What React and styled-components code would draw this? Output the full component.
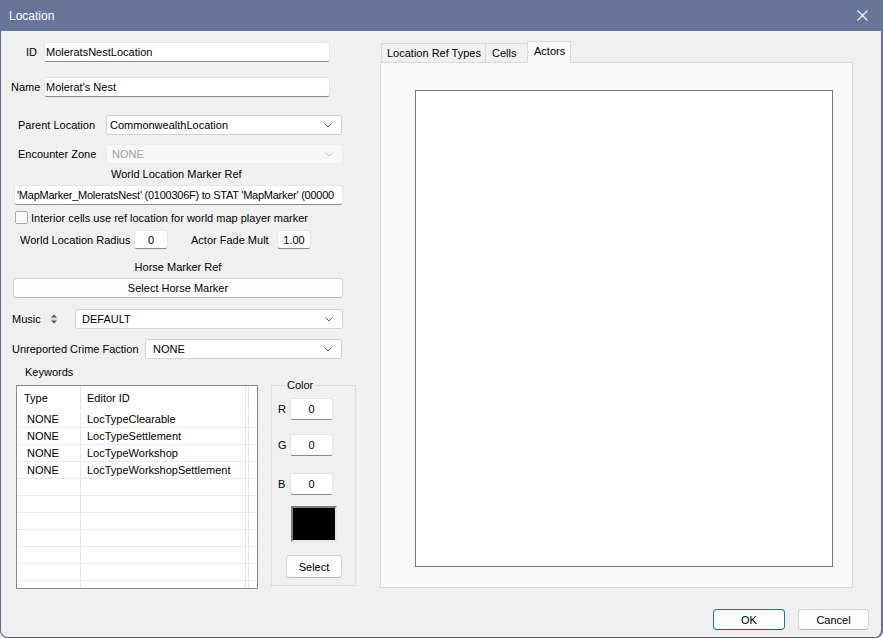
import React from "react";
import styled, { createGlobalStyle } from "styled-components";

const GlobalStyle = createGlobalStyle`
  html, body { margin: 0; padding: 0; background: #f0f0f0; }
  body { font-family: "Liberation Sans", Arial, sans-serif; font-size: 11px; color: #000; }
  * { box-sizing: border-box; }
`;

const Window = styled.div`
  width: 883px;
  height: 638px;
  display: flex;
  flex-direction: column;
  overflow: hidden;
  background: #f0f0f0;
`;

const TitleBar = styled.div`
  height: 31px;
  flex-shrink: 0;
  background: #68759a;
  color: #fff;
  font-size: 12px;
  display: flex;
  align-items: center;
  justify-content: space-between;
  padding: 0 15px 0 9px;
`;

const Frame = styled.div`
  flex: 1;
  display: flex;
  flex-direction: column;
  border-radius: 0 0 8px 8px;
  box-shadow: inset 1px 0 #5f6b90, inset -2px 0 #6a7088, inset 0 -1px #5a5f70;
`;

const Main = styled.div`
  height: 559px;
  display: flex;
`;

const LeftCol = styled.div`
  width: 380px;
  flex-shrink: 0;
  display: flex;
  flex-direction: column;
`;

const Row = styled.div`
  display: flex;
  align-items: center;
  height: ${(p) => p.$h || 20}px;
  margin-top: ${(p) => p.$mt || 0}px;
  padding-left: ${(p) => p.$pl || 0}px;
  flex-shrink: 0;
`;

const Label = styled.span`
  width: ${(p) => (p.$w ? `${p.$w}px` : "auto")};
  margin-left: ${(p) => p.$ml || 0}px;
  flex-shrink: 0;
  white-space: nowrap;
`;

const Caption = styled.div`
  height: 13px;
  line-height: 13px;
  margin-top: ${(p) => p.$mt || 0}px;
  margin-left: ${(p) => p.$ml || 0}px;
  width: ${(p) => (p.$w ? `${p.$w}px` : "auto")};
  text-align: ${(p) => (p.$center ? "center" : "left")};
  white-space: nowrap;
  flex-shrink: 0;
`;

const Edit = styled.div`
  width: ${(p) => p.$w}px;
  height: ${(p) => p.$h || 20}px;
  margin-left: ${(p) => p.$ml || 0}px;
  background: #fff;
  border: 1px solid #e6e6e6;
  border-bottom-color: #8a8a8a;
  border-radius: 3px;
  display: flex;
  align-items: center;
  justify-content: ${(p) => (p.$center ? "center" : "flex-start")};
  padding-left: ${(p) => (p.$center ? 0 : p.$pl ?? 1)}px;
  letter-spacing: ${(p) => p.$ls || 0}px;
  white-space: nowrap;
  overflow: hidden;
  flex-shrink: 0;
`;

const SelectBox = styled.div`
  width: ${(p) => p.$w}px;
  height: 20px;
  margin-left: ${(p) => p.$ml || 0}px;
  background: ${(p) => (p.$disabled ? "#f8f8f8" : "#fff")};
  border: 1px solid ${(p) => (p.$disabled ? "#ececec" : "#d2d2d2")};
  border-radius: 3px;
  display: flex;
  align-items: center;
  justify-content: space-between;
  padding: 0 9px 0 ${(p) => p.$pl || 3}px;
  color: ${(p) => (p.$disabled ? "#a2a2a2" : "#000")};
  flex-shrink: 0;
`;

const PushButton = styled.div`
  width: ${(p) => p.$w}px;
  height: ${(p) => p.$h || 20}px;
  margin-left: ${(p) => p.$ml || 0}px;
  margin-top: ${(p) => p.$mt || 0}px;
  background: #fdfdfd;
  border: 1px solid ${(p) => (p.$default ? "#2e6ea8" : "#d4d4d4")};
  border-bottom-color: ${(p) => (p.$default ? "#1f5f9c" : "#b8b8b8")};
  border-radius: 4px;
  display: flex;
  align-items: center;
  justify-content: center;
  flex-shrink: 0;
`;

const CheckBox = styled.div`
  width: 13px;
  height: 13px;
  border: 1px solid #a8a8a8;
  border-radius: 2px;
  background: #fbfbfb;
  flex-shrink: 0;
`;

const Bottom = styled.div`
  display: flex;
  align-items: flex-start;
`;

const ListBox = styled.div`
  width: 242px;
  height: 204px;
  margin-left: 16px;
  margin-top: 6px;
  border: 1px solid #828790;
  background: #fff;
  overflow: hidden;
  flex-shrink: 0;
`;

const GridRow = styled.div`
  display: grid;
  grid-template-columns: 64px 165px 3px 1fr;
  height: ${(p) => p.$h}px;
  border-bottom: 1px solid ${(p) => (p.$header ? "transparent" : "#ececec")};
`;

const Cell = styled.div`
  border-right: 1px solid #e6e6e6;
  padding-left: ${(p) => p.$pl || 0}px;
  display: flex;
  align-items: center;
  white-space: nowrap;
  overflow: hidden;
  &:last-child { border-right: none; }
`;

const Group = styled.fieldset`
  margin: 0 0 0 13px;
  padding: 0 0 0 6px;
  min-width: 0;
  width: 85px;
  height: 207px;
  border: 1px solid #dcdcdc;
  display: flex;
  flex-direction: column;
  flex-shrink: 0;
`;

const Legend = styled.legend`
  margin-left: 7px;
  padding: 0 2px;
  line-height: 13px;
  height: 13px;
`;

const Swatch = styled.div`
  width: 46px;
  height: 36px;
  margin-top: 11px;
  margin-left: 13px;
  background: #000;
  border: 2px solid;
  border-color: #7c7c7c #e6e6e6 #e6e6e6 #7c7c7c;
`;

const RightCol = styled.div`
  width: 473px;
  flex-shrink: 0;
  padding-top: 10px;
  display: flex;
  flex-direction: column;
`;

const TabStrip = styled.div`
  height: 21px;
  display: flex;
  align-items: flex-end;
  padding-left: 1px;
`;

const Tab = styled.div`
  position: relative;
  z-index: ${(p) => (p.$active ? 2 : 1)};
  width: ${(p) => p.$w}px;
  height: ${(p) => (p.$active ? 22 : 19)}px;
  margin-bottom: ${(p) => (p.$active ? -1 : 0)}px;
  padding-left: ${(p) => p.$pl}px;
  padding-bottom: ${(p) => (p.$active ? 3 : 0)}px;
  background: ${(p) => (p.$active ? "#f9f9f9" : "#f0f0f0")};
  border: 1px solid #dadada;
  border-bottom: none;
  ${(p) => (p.$active ? "" : "border-right: none;")}
  display: flex;
  align-items: center;
  white-space: nowrap;
`;

const Panel = styled.div`
  width: 473px;
  height: 526px;
  background: #f9f9f9;
  border: 1px solid #dadada;
  padding: 27px 0 0 34px;
`;

const ActorList = styled.div`
  width: 418px;
  height: 477px;
  background: #fff;
  border: 1px solid #7a7a7a;
`;

const Footer = styled.div`
  display: flex;
  justify-content: flex-end;
  gap: 13px;
  padding: 19px 14px 0 0;
`;

const Chevron = ({ disabled }) => (
  <svg width="8" height="5" viewBox="0 0 8 5">
    <path d="M0.5 0.5 L4 4 L7.5 0.5" fill="none" stroke={disabled ? "#c4c4c4" : "#606060"} strokeWidth="1" />
  </svg>
);

const Spinner = () => (
  <svg width="10" height="14" viewBox="0 0 10 14" style={{ flexShrink: 0 }}>
    <path d="M2 5.5 L5 2.5 L8 5.5 Z" fill="#505050" />
    <path d="M1 7 H9" stroke="#c8c8c8" strokeWidth="1" />
    <path d="M2 8.5 L5 11.5 L8 8.5 Z" fill="#505050" />
  </svg>
);

const CloseIcon = () => (
  <svg width="11" height="11" viewBox="0 0 11 11">
    <path d="M0.5 0.5 L10.5 10.5 M10.5 0.5 L0.5 10.5" stroke="#fff" strokeWidth="1.1" />
  </svg>
);

const Select = ({ w, ml, pl, disabled, children }) => (
  <SelectBox $w={w} $ml={ml} $pl={pl} $disabled={disabled}>
    <span>{children}</span>
    <Chevron disabled={disabled} />
  </SelectBox>
);

const keywords = [
  ["NONE", "LocTypeClearable"],
  ["NONE", "LocTypeSettlement"],
  ["NONE", "LocTypeWorkshop"],
  ["NONE", "LocTypeWorkshopSettlement"],
];

export default function App() {
  const rows = [...keywords, ...Array.from({ length: 7 }, () => ["", ""])];
  return (
    <>
      <GlobalStyle />
      <Window>
        <TitleBar>
          <span>Location</span>
          <CloseIcon />
        </TitleBar>
        <Frame>
          <Main>
            <LeftCol>
              <Row $mt={11} $pl={26}>
                <Label $w={18}>ID</Label>
                <Edit $w={286}>MoleratsNestLocation</Edit>
              </Row>
              <Row $mt={15} $pl={11}>
                <Label $w={33}>Name</Label>
                <Edit $w={286}>Molerat's Nest</Edit>
              </Row>
              <Row $mt={18} $pl={18}>
                <Label $w={88}>Parent Location</Label>
                <Select w={236} pl={3}>CommonwealthLocation</Select>
              </Row>
              <Row $mt={9} $pl={18}>
                <Label $w={88}>Encounter Zone</Label>
                <Select w={237} pl={5} disabled>NONE</Select>
              </Row>
              <Caption $mt={4} $ml={111}>World Location Marker Ref</Caption>
              <Row $mt={4} $pl={14}>
                <Edit $w={329} $pl={2} $ls={-0.25}>'MapMarker_MoleratsNest' (0100306F) to STAT 'MapMarker' (00000</Edit>
              </Row>
              <Row $mt={6} $pl={15} $h={13}>
                <CheckBox />
                <Label $ml={3}>Interior cells use ref location for world map player marker</Label>
              </Row>
              <Row $mt={6} $pl={20} $h={19}>
                <Label $w={114}>World Location Radius</Label>
                <Edit $w={34} $h={19} $center>0</Edit>
                <Label $w={86} $ml={23}>Actor Fade Mult</Label>
                <Edit $w={34} $h={19} $center>1.00</Edit>
              </Row>
              <Caption $mt={12} $ml={13} $w={330} $center>Horse Marker Ref</Caption>
              <PushButton $mt={4} $ml={13} $w={330}>Select Horse Marker</PushButton>
              <Row $mt={11} $pl={12}>
                <Label $w={37}>Music</Label>
                <Spinner />
                <Select w={268} ml={16} pl={6}>DEFAULT</Select>
              </Row>
              <Row $mt={10} $pl={12}>
                <Label $w={133}>Unreported Crime Faction</Label>
                <Select w={197} pl={7}>NONE</Select>
              </Row>
              <Caption $mt={7} $ml={25}>Keywords</Caption>
              <Bottom>
                <ListBox>
                  <GridRow $h={25} $header>
                    <Cell $pl={7}>Type</Cell>
                    <Cell $pl={6}>Editor ID</Cell>
                    <Cell />
                    <Cell />
                  </GridRow>
                  {rows.map(([t, id], i) => (
                    <GridRow key={i} $h={17}>
                      <Cell $pl={10}>{t}</Cell>
                      <Cell $pl={6}>{id}</Cell>
                      <Cell />
                      <Cell />
                    </GridRow>
                  ))}
                </ListBox>
                <Group>
                  <Legend>Color</Legend>
                  <Row $mt={6} $h={22}>
                    <Label $w={12}>R</Label>
                    <Edit $w={43} $h={22} $center>0</Edit>
                  </Row>
                  <Row $mt={14} $h={22}>
                    <Label $w={12}>G</Label>
                    <Edit $w={43} $h={22} $center>0</Edit>
                  </Row>
                  <Row $mt={17} $h={22}>
                    <Label $w={12}>B</Label>
                    <Edit $w={43} $h={22} $center>0</Edit>
                  </Row>
                  <Swatch />
                  <PushButton $mt={13} $ml={8} $w={56} $h={23}>Select</PushButton>
                </Group>
              </Bottom>
            </LeftCol>
            <RightCol>
              <TabStrip>
                <Tab $w={104} $pl={5}>Location Ref Types</Tab>
                <Tab $w={42} $pl={6}>Cells</Tab>
                <Tab $w={44} $pl={6} $active>Actors</Tab>
              </TabStrip>
              <Panel>
                <ActorList />
              </Panel>
            </RightCol>
          </Main>
          <Footer>
            <PushButton $w={72} $h={21} $default>OK</PushButton>
            <PushButton $w={71} $h={21}>Cancel</PushButton>
          </Footer>
        </Frame>
      </Window>
    </>
  );
}
